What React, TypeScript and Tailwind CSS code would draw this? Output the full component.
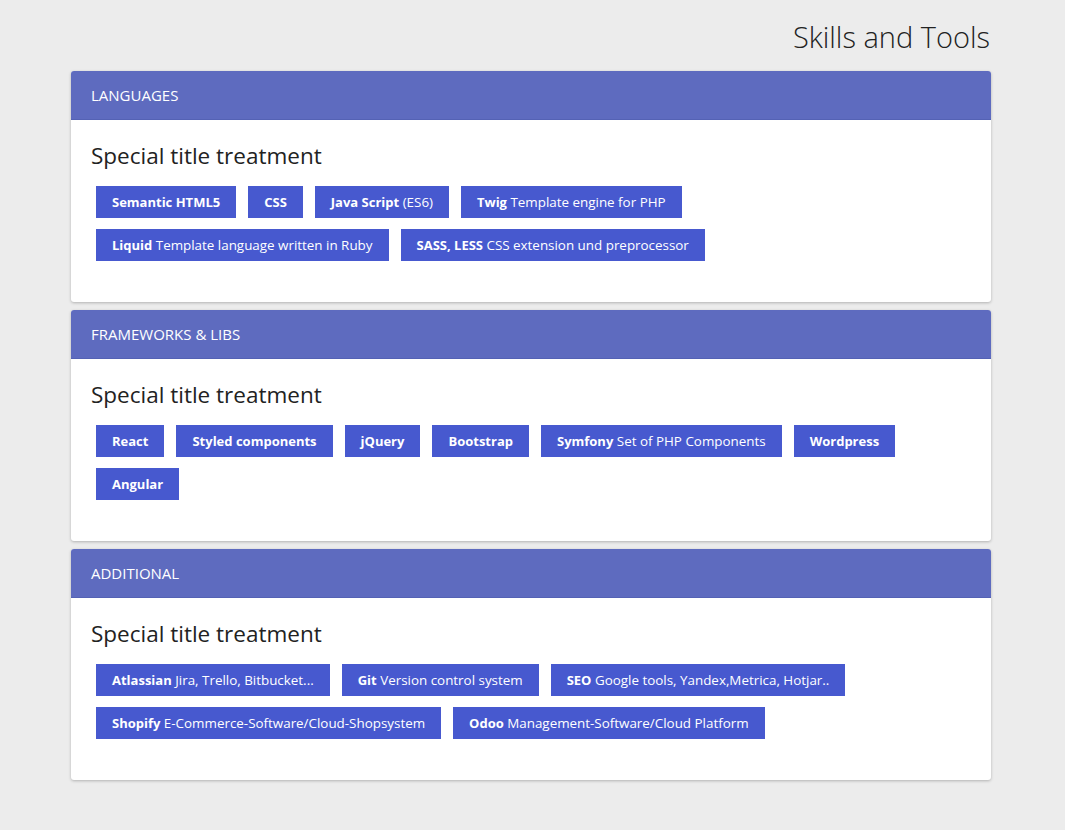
import React from "react";

type Item = { b: string; t?: string };

const sections: { name: string; items: Item[] }[] = [
  {
    name: "LANGUAGES",
    items: [
      { b: "Semantic HTML5" },
      { b: "CSS" },
      { b: "Java Script", t: "(ES6)" },
      { b: "Twig", t: "Template engine for PHP" },
      { b: "Liquid", t: "Template language written in Ruby" },
      { b: "SASS, LESS", t: "CSS extension und preprocessor" },
    ],
  },
  {
    name: "FRAMEWORKS & LIBS",
    items: [
      { b: "React" },
      { b: "Styled components" },
      { b: "jQuery" },
      { b: "Bootstrap" },
      { b: "Symfony", t: "Set of PHP Components" },
      { b: "Wordpress" },
      { b: "Angular" },
    ],
  },
  {
    name: "ADDITIONAL",
    items: [
      { b: "Atlassian", t: "Jira, Trello, Bitbucket..." },
      { b: "Git", t: "Version control system" },
      { b: "SEO", t: "Google tools, Yandex,Metrica, Hotjar.." },
      { b: "Shopify", t: "E-Commerce-Software/Cloud-Shopsystem" },
      { b: "Odoo", t: "Management-Software/Cloud Platform" },
    ],
  },
];

export default function App() {
  return (
    <div
      className="min-h-[830px] w-full bg-[#ececec] text-[#212529]"
      style={{ fontFamily: '"Open Sans", "Noto Sans", sans-serif' }}
    >
      <div className="ml-[71px] w-[920px] pt-[17px]">
        <h1 className="text-right text-[29px] font-light leading-[40px] text-[#222] mr-[1px] mb-[14px]">
          Skills and Tools
        </h1>
        <div className="flex flex-col gap-[8px]">
          {sections.map((s) => (
            <div
              key={s.name}
              className="overflow-hidden rounded-[3px] bg-white shadow-[0_1px_3px_rgba(0,0,0,0.25)]"
            >
              <div className="flex h-[49px] items-center bg-[#5e6bbf] px-[20px] text-[15px] text-white border-b border-[#5462b4]">
                {s.name}
              </div>
              <div className="px-[20px] pt-[23px] pb-[41px]">
                <h5 className="text-[22.5px] leading-[26px] text-[#222] mb-[17px]">
                  Special title treatment
                </h5>
                <div className="ml-[5px] flex flex-wrap gap-x-[12px] gap-y-[11px]">
                  {s.items.map((it) => (
                    <div
                      key={it.b}
                      className="flex h-[32px] items-center bg-[#4759cf] px-[16px] text-white"
                    >
                      <span className="text-[13.4px] leading-[18px] whitespace-nowrap">
                        <b className="font-bold text-[13px]">{it.b}</b>
                        {it.t ? " " + it.t : ""}
                      </span>
                    </div>
                  ))}
                </div>
              </div>
            </div>
          ))}
        </div>
      </div>
    </div>
  );
}
